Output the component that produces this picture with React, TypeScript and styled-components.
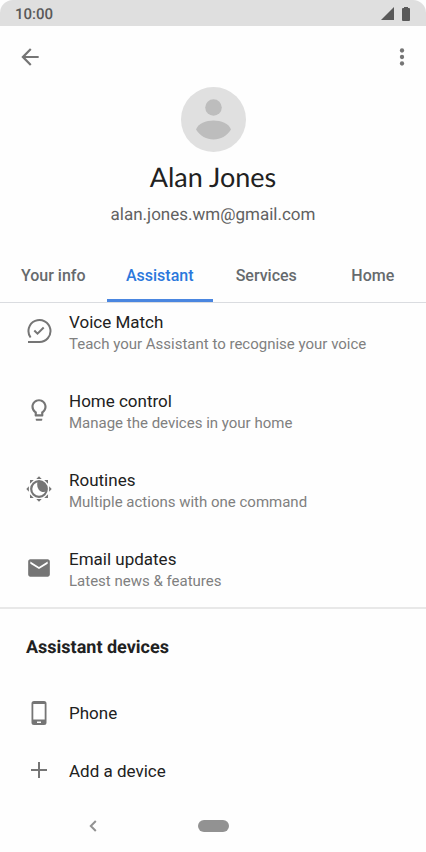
import React from "react";
import styled, { createGlobalStyle } from "styled-components";

const GlobalStyle = createGlobalStyle`
  *, *::before, *::after { box-sizing: border-box; }
  body {
    margin: 0;
    background: #fefefe;
    color: #212121;
    font-family: Roboto, "Liberation Sans", sans-serif;
    text-rendering: geometricPrecision;
  }
  button {
    border: 0;
    padding: 0;
    background: none;
    color: inherit;
    font: inherit;
    cursor: pointer;
  }
  h1, h2, p, ul { margin: 0; padding: 0; }
`;

const Screen = styled.div`
  display: flex;
  flex-direction: column;
  min-height: 100vh;
`;

const StatusBar = styled.div`
  display: flex;
  align-items: center;
  justify-content: space-between;
  height: 26px;
  padding: 1px 16px 0 15px;
  border-radius: 13px 13px 0 0;
  background: #dfdfdf;
  color: #595959;
  font-size: 15px;
  font-weight: 500;
`;

const StatusIcons = styled.div`
  display: flex;
  align-items: center;
  gap: 8px;
`;

const Toolbar = styled.header`
  display: flex;
  align-items: center;
  justify-content: space-between;
  height: 61px;
  padding: 0 10px 0 16px;
  color: #757575;
`;

const IconButton = styled.button`
  display: grid;
  place-items: center;
  width: 28px;
  height: 40px;
`;

const Profile = styled.section`
  display: flex;
  flex-direction: column;
  align-items: center;
  gap: 8px;
  padding-bottom: 23px;
`;

const ProfileName = styled.h1`
  font-family: Lato, Roboto, sans-serif;
  font-size: 27px;
  font-weight: 400;
  line-height: 34px;
`;

const Email = styled.p`
  color: #616161;
  font-size: 17px;
  line-height: 26px;
`;

const Tabs = styled.nav`
  display: grid;
  grid-template-columns: repeat(4, 1fr);
  height: 52px;
  border-bottom: 1px solid #dadce0;
`;

const Tab = styled.button<{ $active?: boolean }>`
  border-bottom: 3px solid ${(p) => (p.$active ? "#4a86e0" : "transparent")};
  color: ${(p) => (p.$active ? "#2b78dc" : "#666a6d")};
  font-size: 16px;
  font-weight: 500;
`;

const List = styled.ul<{ $gap: number }>`
  display: flex;
  flex-direction: column;
  gap: ${(p) => p.$gap}px;
  list-style: none;
`;

const Settings = styled.section`
  padding: 8px 0 15px;
  border-bottom: 2px solid #e8e8e8;
`;

const Row = styled.button`
  display: flex;
  align-items: center;
  gap: 17px;
  width: 100%;
  padding: 0 26px;
  text-align: left;
`;

const RowIcon = styled.span<{ $raised?: boolean }>`
  flex: none;
  padding-bottom: ${(p) => (p.$raised ? "4px" : "0")};
  color: #757575;
`;

const RowText = styled.span`
  display: flex;
  flex-direction: column;
`;

const RowTitle = styled.span`
  font-size: 17px;
  line-height: 22px;
`;

const RowDetail = styled.span`
  color: #808080;
  font-size: 15px;
  line-height: 22px;
`;

const Devices = styled.section`
  padding-top: 27px;
`;

const SectionTitle = styled.h2`
  padding: 0 26px;
  margin-bottom: 40px;
  font-size: 18px;
  font-weight: 700;
  line-height: 24px;
`;

const SystemNav = styled.footer`
  display: grid;
  grid-template-columns: 1fr auto 1fr;
  align-items: center;
  height: 52px;
  margin-top: auto;
  color: #929292;
`;

const NavBack = styled.button`
  justify-self: center;
  padding: 8px;
  margin-right: 12px;
`;

const HomePill = styled.button`
  width: 31px;
  height: 12px;
  border-radius: 6px;
  background: #929292;
`;

const Glyph = styled.svg`
  display: block;
  fill: currentColor;
`;

const LineGlyph = styled.svg`
  display: block;
  fill: none;
  stroke: currentColor;
  stroke-width: 2;
`;

const Signal = () => (
  <Glyph width="13" height="13" viewBox="0 0 13 13"><path d="M13 0v13H0z" /></Glyph>
);
const Battery = () => (
  <Glyph width="8" height="14" viewBox="0 0 8 14">
    <path d="M2 0h4v1h1a1 1 0 0 1 1 1v11a1 1 0 0 1-1 1H1a1 1 0 0 1-1-1V2a1 1 0 0 1 1-1h1z" />
  </Glyph>
);
const BackArrow = () => (
  <Glyph width="26" height="26" viewBox="0 0 24 24">
    <path d="M20 11H7.830l5.590-5.590L12 4l-8 8 8 8 1.410-1.410L7.830 13H20v-2z" />
  </Glyph>
);
const More = () => (
  <Glyph width="26" height="26" viewBox="0 0 24 24">
    <circle cx="12" cy="6" r="2" /><circle cx="12" cy="12" r="2" /><circle cx="12" cy="18" r="2" />
  </Glyph>
);
const Avatar = () => (
  <Glyph width="65" height="65" viewBox="0 0 65 65" role="img" aria-label="Profile picture">
    <circle cx="32.5" cy="32.5" r="32.5" fill="#e0e0e0" />
    <g fill="#bdbdbd">
      <circle cx="32.5" cy="20.5" r="8.3" />
      <path d="M15 42.5C17 36.5 25 33.5 32.5 33.5s15.500 3 17.500 9C46 49 39.500 52.500 32.500 52.500S19 49 15 42.500z" />
    </g>
  </Glyph>
);
const VoiceMatchIcon = () => (
  <LineGlyph width="26" height="26" viewBox="0 0 26 26">
    <path d="M4.600 19.500A11 11 0 1 1 13 24H2" />
    <path d="M8.300 12.500l3.200 3.200 6.200-6.200" />
  </LineGlyph>
);
const BulbIcon = () => (
  <Glyph width="26" height="26" viewBox="0 0 24 24">
    <path d="M9 21c0 .55.45 1 1 1h4c.55 0 1-.45 1-1v-1H9v1zm3-19C8.140 2 5 5.140 5 9c0 2.380 1.190 4.470 3 5.740V17c0 .55.45 1 1 1h6c.55 0 1-.45 1-1v-2.260c1.810-1.270 3-3.360 3-5.740 0-3.860-3.140-7-7-7zm2.850 11.100-.85.6V16h-4v-2.300l-.85-.6A4.997 4.997 0 0 1 7 9c0-2.760 2.240-5 5-5s5 2.240 5 5c0 1.630-.8 3.160-2.150 4.100z" />
  </Glyph>
);
const RoutinesIcon = () => (
  <Glyph width="26" height="26" viewBox="0 0 26 26">
    <circle cx="13" cy="13" r="7.800" fill="none" stroke="currentColor" strokeWidth="2.200" />
    <path d="M11.500 5.500A8 8 0 0 1 20.500 15C17.500 18 9.500 15 11.500 5.500z" />
    {[0, 45, 90, 135, 180, 225, 270, 315].map((angle) => (
      <path key={angle} d="M13 .300l2.700 2.600h-5.400z" transform={`rotate(${angle} 13 13)`} />
    ))}
  </Glyph>
);
const MailIcon = () => (
  <Glyph width="26" height="26" viewBox="0 0 24 24">
    <path d="M20 4H4c-1.100 0-1.990.9-1.990 2L2 18c0 1.100.9 2 2 2h16c1.100 0 2-.9 2-2V6c0-1.100-.9-2-2-2zm0 4l-8 5-8-5V6l8 5 8-5v2z" />
  </Glyph>
);
const PhoneIcon = () => (
  <Glyph width="26" height="26" viewBox="0 0 26 26">
    <path
      fillRule="evenodd"
      d="M8 1h10a2.500 2.500 0 0 1 2.500 2.500v19a2.500 2.500 0 0 1-2.500 2.500H8a2.500 2.500 0 0 1-2.500-2.500v-19A2.500 2.500 0 0 1 8 1zM7.300 4v15.500h11.400V4zM11 21.500v1.500h4v-1.500z"
    />
  </Glyph>
);
const PlusIcon = () => (
  <Glyph width="26" height="26" viewBox="0 0 26 26"><path d="M12 4h2v7h7v2h-7v7h-2v-7H5v-2h7z" /></Glyph>
);
const ChevronIcon = () => (
  <LineGlyph width="8" height="12" viewBox="0 0 8 12">
    <path d="M6.800 1L1.800 6l5 5" />
  </LineGlyph>
);

const tabs = ["Your info", "Assistant", "Services", "Home"];

const settings = [
  { title: "Voice Match", detail: "Teach your Assistant to recognise your voice", icon: <VoiceMatchIcon /> },
  { title: "Home control", detail: "Manage the devices in your home", icon: <BulbIcon /> },
  { title: "Routines", detail: "Multiple actions with one command", icon: <RoutinesIcon /> },
  { title: "Email updates", detail: "Latest news & features", icon: <MailIcon /> },
];

const devices = [
  { title: "Phone", icon: <PhoneIcon /> },
  { title: "Add a device", icon: <PlusIcon /> },
];

export default function App() {
  const [active, setActive] = React.useState("Assistant");
  return (
    <>
      <GlobalStyle />
      <Screen>
        <StatusBar>
          <span>10:00</span>
          <StatusIcons><Signal /><Battery /></StatusIcons>
        </StatusBar>
        <Toolbar>
          <IconButton aria-label="Back"><BackArrow /></IconButton>
          <IconButton aria-label="More options"><More /></IconButton>
        </Toolbar>
        <Profile>
          <Avatar />
          <ProfileName>Alan Jones</ProfileName>
          <Email>alan.jones.wm@gmail.com</Email>
        </Profile>
        <Tabs>
          {tabs.map((tab) => (
            <Tab
              key={tab}
              $active={tab === active}
              aria-current={tab === active ? "page" : undefined}
              onClick={() => setActive(tab)}
            >
              {tab}
            </Tab>
          ))}
        </Tabs>
        <main>
          <Settings>
            <List $gap={35}>
              {settings.map((item) => (
                <li key={item.title}>
                  <Row>
                    <RowIcon $raised>{item.icon}</RowIcon>
                    <RowText>
                      <RowTitle>{item.title}</RowTitle>
                      <RowDetail>{item.detail}</RowDetail>
                    </RowText>
                  </Row>
                </li>
              ))}
            </List>
          </Settings>
          <Devices>
            <SectionTitle>Assistant devices</SectionTitle>
            <List $gap={32}>
              {devices.map((item) => (
                <li key={item.title}>
                  <Row>
                    <RowIcon>{item.icon}</RowIcon>
                    <RowTitle>{item.title}</RowTitle>
                  </Row>
                </li>
              ))}
            </List>
          </Devices>
        </main>
        <SystemNav>
          <NavBack aria-label="System back"><ChevronIcon /></NavBack>
          <HomePill aria-label="System home" />
        </SystemNav>
      </Screen>
    </>
  );
}
